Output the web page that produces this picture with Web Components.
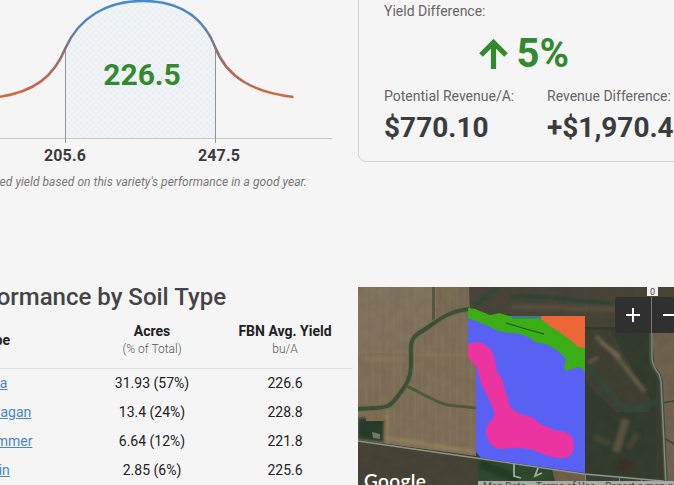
<!DOCTYPE html>
<html lang="en">
<head>
  <meta charset="UTF-8">
  <meta name="viewport" content="width=device-width, initial-scale=1.0">
  <title>Yield Report</title>
  <style>
    html, body { margin: 0; height: 100%; overflow: hidden; background: #f5f5f5; }
    body { font-family: Roboto, "Liberation Sans", sans-serif; color: #212121; }
  </style>
</head>
<body>
  <yield-report></yield-report>

  <script>
    // Shared base: puts the template of a component in an open shadow root.
    class ReportElement extends HTMLElement {
      constructor() {
        super();
        this.attachShadow({ mode: 'open' });
      }

      connectedCallback() {
        this.shadowRoot.innerHTML = this.template();
      }
    }

    // Bell curve with the expected yield range
    class YieldCurve extends ReportElement {
      template() {
        return `
          <style>
            :host { display: block; width: 334px; }
            svg { display: block; }
            text { font-weight: 700; text-anchor: middle; }
            .average { font-size: 30px; fill: #338a2e; }
            .limit { font-size: 16px; fill: #3c3c3c; letter-spacing: 0.15px; }
            .note {
              display: flex;
              justify-content: flex-end;
              width: 307px;
              margin: 7px 0 0;
              font-size: 12px;
              line-height: 16px;
              font-style: italic;
              color: #777;
              white-space: nowrap;
              letter-spacing: 0.05px;
            }
          </style>
          <svg width="334" height="167" viewBox="0 0 334 167">
            <defs>
              <linearGradient id="stroke" gradientUnits="userSpaceOnUse" x1="0" y1="0" x2="0" y2="97">
                <stop offset="0" stop-color="#438bca"/>
                <stop offset="0.22" stop-color="#5487bb"/>
                <stop offset="0.5" stop-color="#85737f"/>
                <stop offset="0.8" stop-color="#ba6b4f"/>
                <stop offset="1" stop-color="#ce6c42"/>
              </linearGradient>
              <pattern id="hatch" width="6" height="6" patternUnits="userSpaceOnUse">
                <path d="M0 0L6 6M6 0L0 6" stroke="#e1e7ec" stroke-width="0.5"/>
              </pattern>
            </defs>
            <path d="M65.500 138V48C79 18 106 1 143 1S204 18 215.500 48V138Z" fill="#f1f4f7"/>
            <path d="M65.500 138V48C79 18 106 1 143 1S204 18 215.500 48V138Z" fill="url(#hatch)"/>
            <path d="M0 138.500H332" stroke="#c6c6c6"/>
            <path d="M65.500 48V143M215.500 48V143" stroke="#929292"/>
            <path d="M-2 97C35 92 54 76 65.500 48C79 18 106 1 143 1S204 18 215.500 48C227 77 252 92 293.500 97"
              fill="none" stroke="url(#stroke)" stroke-width="2.6"/>
            <text class="average" x="142" y="85">226.5</text>
            <text class="limit" x="65" y="161">205.6</text>
            <text class="limit" x="219" y="161">247.5</text>
          </svg>
          <p class="note"><span>Estimated yield based on this variety's performance in a good year.</span></p>
        `;
      }
    }

    class RevenueCard extends ReportElement {
      template() {
        return `
          <style>
            :host {
              display: block;
              box-sizing: border-box;
              width: 360px;
              height: 182px;
              margin-top: -20px;
              padding: 22px 25px 0;
              border: 1px solid #d2d2d2;
              border-radius: 8px;
            }
            .label { font-size: 14px; line-height: 16px; color: #666; white-space: nowrap; }
            .change {
              display: flex;
              align-items: center;
              gap: 8px;
              width: 185px;
              height: 48px;
              justify-content: flex-end;
              margin: 11px 0 10px;
              font-size: 40px;
              line-height: 48px;
              font-weight: 700;
              color: #338a2e;
            }
            .change svg { margin-bottom: 1px; }
            .figures { display: grid; grid-template-columns: 163px auto; }
            .figures strong {
              display: block;
              margin-top: 8px;
              font-size: 28px;
              line-height: 32px;
              color: #3c3c3c;
              white-space: nowrap;
            }
          </style>
          <div class="label">Yield Difference:</div>
          <div class="change">
            <svg width="29" height="30" viewBox="0 0 29 30">
              <path d="M14.500 30V4M2 16L14.500 3.500L27 16" fill="none" stroke="currentColor" stroke-width="5.2"/>
            </svg>
            <span>5%</span>
          </div>
          <div class="figures">
            <div><div class="label">Potential Revenue/A:</div><strong>$770.10</strong></div>
            <div><div class="label">Revenue Difference:</div><strong>+$1,970.47</strong></div>
          </div>
        `;
      }
    }

    class SoilTable extends ReportElement {
      template() {
        const rows = [
          ['Ipava', '31.93 (57%)', '226.6'],
          ['Flanagan', '13.4 (24%)', '228.8'],
          ['Drummer', '6.64 (12%)', '221.8'],
          ['Catlin', '2.85 (6%)', '225.6']
        ];

        return `
          <style>
            :host { display: block; width: 358px; }
            h2 {
              display: flex;
              justify-content: flex-end;
              width: 226px;
              margin: -5px 0 0;
              font-size: 24px;
              line-height: 30px;
              font-weight: 500;
              color: #444;
              white-space: nowrap;
            }
            .row {
              display: grid;
              grid-template-columns: 106px 144px 122px;
              width: 378px;
              margin-left: -26px;
              height: 29px;
              align-items: center;
              text-align: center;
              font-size: 14px;
            }
            .row > :first-child { text-align: left; }
            .head {
              height: 56px;
              width: 378px;
              border-bottom: 1px solid #dadddd;
              font-weight: 700;
              line-height: 18px;
            }
            .head > :first-child { width: 36px; text-align: right; }
            .head small { display: block; font-size: 12px; font-weight: 300; color: #555; }
            .head + .row { margin-top: -1px; }
            a { color: #4a87bd; text-decoration: underline; }
          </style>
          <h2><span>Performance by Soil Type</span></h2>
          <div class="row head">
            <span>Type</span>
            <span>Acres<small>(% of Total)</small></span>
            <span>FBN Avg. Yield<small>bu/A</small></span>
          </div>
          ${rows.map(([name, acres, avg]) => `
            <div class="row"><a>${name}</a><span>${acres}</span><span>${avg}</span></div>
          `).join('')}
        `;
      }
    }

    // Satellite view with the soil zones drawn over it
    class SoilMap extends ReportElement {
      template() {
        return `
          <style>
            :host { display: block; position: relative; width: 316px; height: 198px; overflow: hidden; background: #3b3e2f; }
            svg { display: block; }
            .zoom {
              position: absolute;
              top: 10px;
              left: 257px;
              display: flex;
              height: 36px;
              background: #303031;
              border-radius: 3px 0 0 3px;
            }
            .zoom span { display: flex; width: 36px; align-items: center; justify-content: center; }
            .zoom span + span { border-left: 1px solid #777; }
            .count {
              position: absolute;
              top: 0;
              left: 289px;
              width: 11px;
              height: 9px;
              background: #f1f1f1;
              font: 9px/10px Roboto, sans-serif;
              color: #444;
              text-align: center;
            }
            .brand {
              position: absolute;
              left: 6px;
              top: 182px;
              font: 600 19px/24px Lato, sans-serif;
              letter-spacing: 0.35px;
              color: #fff;
            }
            .credits {
              position: absolute;
              left: 120px;
              top: 194px;
              display: flex;
              gap: 10px;
              width: 196px;
              height: 14px;
              padding-left: 5px;
              background: #a9aaa5;
              font-size: 10px;
              line-height: 12px;
              color: #444;
              white-space: nowrap;
            }
          </style>
          <svg width="316" height="198" viewBox="0 0 316 198">
            <defs>
              <pattern id="furrows" width="7" height="9" patternUnits="userSpaceOnUse">
                <path d="M1 0V9" stroke="#b09c76" stroke-opacity="0.13"/>
                <path d="M4 0V9" stroke="#65583f" stroke-opacity="0.07"/>
              </pattern>
              <filter id="soft" x="-20%" y="-20%" width="140%" height="140%"><feGaussianBlur stdDeviation="1.8"/></filter>
              <filter id="edge" x="-10%" y="-10%" width="120%" height="120%"><feGaussianBlur stdDeviation="0.5"/></filter>
              <filter id="grain" x="0" y="0" width="100%" height="100%">
                <feTurbulence type="fractalNoise" baseFrequency="0.09" numOctaves="4" seed="4"/>
                <feColorMatrix values="0 0 0 0 0  0 0 0 0 0  0 0 0 0 0  1.2 0 0 0 -0.42"/>
              </filter>
            </defs>

            <!-- Fields to the west -->
            <path d="M0 0H112V70L118 72V169L0 153Z" fill="#7f6f58"/>
            <path d="M0 0H75V33L58 50L50 66H0Z" fill="#82735c"/>
            <path d="M78 0H111V22L78 31Z" fill="#796b54"/>
            <path d="M0 0H112V70L118 72V169L0 153Z" fill="url(#furrows)"/>
            <g filter="url(#soft)">
              <path d="M4 72H48M56 68H112" stroke="#907e5d" stroke-width="3" opacity=".6"/>
              <path d="M0 131H27L26 155L0 152Z" fill="#263e2a"/>
              <path d="M29 128L28 151L116 165" fill="none" stroke="#92805f" stroke-width="4"/>
            </g>
            <path d="M8 126H27V134H8Z" fill="#806d52" filter="url(#edge)"/>
            <path d="M14 145l8 2v5l-7-1z" fill="#6f7a69" filter="url(#edge)"/>
            <path d="M24.500 145V154" stroke="#98968a" stroke-width="1.5" filter="url(#edge)"/>
            <g fill="none" filter="url(#edge)">
              <path d="M75.500 0V33" stroke="#555840" stroke-width="3"/>
              <path d="M111 22C91 24 80 33 66 43C55 49 53 53 53 61V80C52 94 47 99 40 109C32 119 31 120 18 121L-1 122"
                stroke="#6a7150" stroke-width="6"/>
              <path d="M111 22C91 24 80 33 66 43C55 49 53 53 53 61V80C52 94 47 99 40 109C32 119 31 120 18 121L-1 122"
                stroke="#3f5038" stroke-width="3.8"/>
              <path d="M48 99C61 104 78 116 90 118L118 121" stroke="#4e5c3d" stroke-width="3"/>
            </g>

            <!-- Darker ground north, east and south -->
            <path d="M111 0H316V44H226V31H112Z" fill="#484538"/>
            <path d="M0 153L118 170L316 193V198H0Z" fill="#484337"/>
            <path d="M120 171L316 193V198H120Z" fill="#304a2e"/>
            <path d="M194 182L227 187V198H198Z" fill="#706049"/>
            <path d="M227 188L316 195V198H227Z" fill="#3a4335"/>
            <path d="M227 40H298V192L227 186Z" fill="#343c2d"/>
            <path d="M226 43H252L292 112V125H258L228 96Z" fill="#3f4132"/>
            <path d="M294 38H316V198H309L304 96L296 78Z" fill="#6f634f"/>
            <g filter="url(#soft)" fill="none">
              <path d="M116 19L140 0" stroke="#2c4937" stroke-width="4"/>
              <path d="M153 11C185 7 218 14 256 17" stroke="#2f4435" stroke-width="4"/>
              <path d="M154 20L260 22" stroke="#5d523f" stroke-width="4"/>
              <path d="M238 49L258 69L287 105" stroke="#665b46" stroke-width="4"/>
              <path d="M243 55L262 70" stroke="#766650" stroke-width="4"/>
              <path d="M230 76L240 70" stroke="#655a44" stroke-width="3"/>
              <path d="M230 82C246 92 256 119 273 124L299 115" stroke="#2f4c3a" stroke-width="4"/>
              <path d="M268 132L258 165" stroke="#5a523c" stroke-width="8"/>
              <path d="M236 150L252 157M280 146L270 162" stroke="#434735" stroke-width="6"/>
              <path d="M260 177L274 180" stroke="#3d3026" stroke-width="11"/>
              <path d="M122 177L160 192" stroke="#233d27" stroke-width="9"/>
            </g>
            <rect width="316" height="198" filter="url(#grain)" opacity="0.09"/>
            <path d="M304 116L316 114M306 151L316 157" stroke="#46432f" stroke-width="1.5" fill="none" filter="url(#edge)"/>
            <path d="M0 154L118 171L226 187L316 195" fill="none" stroke="#8f9588" stroke-width="1.5" filter="url(#edge)"/>
            <path d="M293 46V72Q294 80 300 86L303 94L308 198" fill="none" stroke="#425042" stroke-width="4"/>
            <path d="M294 46V72Q295 80 301 87L303 94L308 198" fill="none" stroke="#858b78" stroke-width="1.4"/>
            <path d="M227.500 187V194M261.500 190V194M283.500 192V194" stroke="#858b80" fill="none"/>
            <path d="M156 177V189L163 191M180 181L177 189L184 186" fill="none" stroke="#a5aa9d" stroke-width="1.8" filter="url(#edge)"/>

            <!-- Soil zones -->
            <path d="M110 29H227V186L123 171L118 165V72L110 69Z" fill="#5961f5"/>
            <path d="M110 21L117 22L132 28L138 27L141 26L155 30L183 31L199 37L220 57L227 59V86L224 81L220 80L214 82L208 84L206 80L208 72C200 63 193 57 177 55C168 47 160 46 152 46L140 44L128 38L110 31Z" fill="#3cae15"/>
            <path d="M181 30L185 29H227V61L220 60C212 52 201 44 193 40Z" fill="#ec6637"/>
            <path d="M154 30.500H183" stroke="#2f8270" stroke-width="2"/>
            <path d="M148 36L158 39L168 42L186 47" stroke="#184b13" fill="none"/>
            <path d="M110 57C122 52 132 58 136 69L139 84Q145 92 147 103L152 119C155 126 165 127 175 131C186 141 197 143 207 145Q216 149 216 158Q216 170 205 171C190 171 183 165 172 162C154 159 152 162 142 162C130 160 125 145 130 137L136 130Q138 126 134 119L123 96L119 80L110 71Z" fill="#ec34a1"/>
          </svg>
          <div class="brand">Google</div>
          <div class="credits"><span>Map Data</span><span>Terms of Use</span><span>Report a map error</span></div>
          <div class="zoom">
            <span><svg width="14" height="14" viewBox="0 0 14 14"><path d="M7 0V14M0 7H14" stroke="#fff" stroke-width="2"/></svg></span>
            <span><svg width="14" height="14" viewBox="0 0 14 14"><path d="M0 7H14" stroke="#fff" stroke-width="2"/></svg></span>
          </div>
          <div class="count">0</div>
        `;
      }
    }

    class YieldReport extends ReportElement {
      template() {
        return `
          <style>
            :host {
              display: grid;
              grid-template-columns: 358px 316px;
              grid-template-rows: 287px 198px;
              align-items: start;
              width: 674px;
              height: 485px;
              overflow: hidden;
            }
          </style>
          <yield-curve></yield-curve>
          <revenue-card></revenue-card>
          <soil-table></soil-table>
          <soil-map></soil-map>
        `;
      }
    }

    customElements.define('yield-curve', YieldCurve);
    customElements.define('revenue-card', RevenueCard);
    customElements.define('soil-table', SoilTable);
    customElements.define('soil-map', SoilMap);
    customElements.define('yield-report', YieldReport);
  </script>
</body>
</html>
